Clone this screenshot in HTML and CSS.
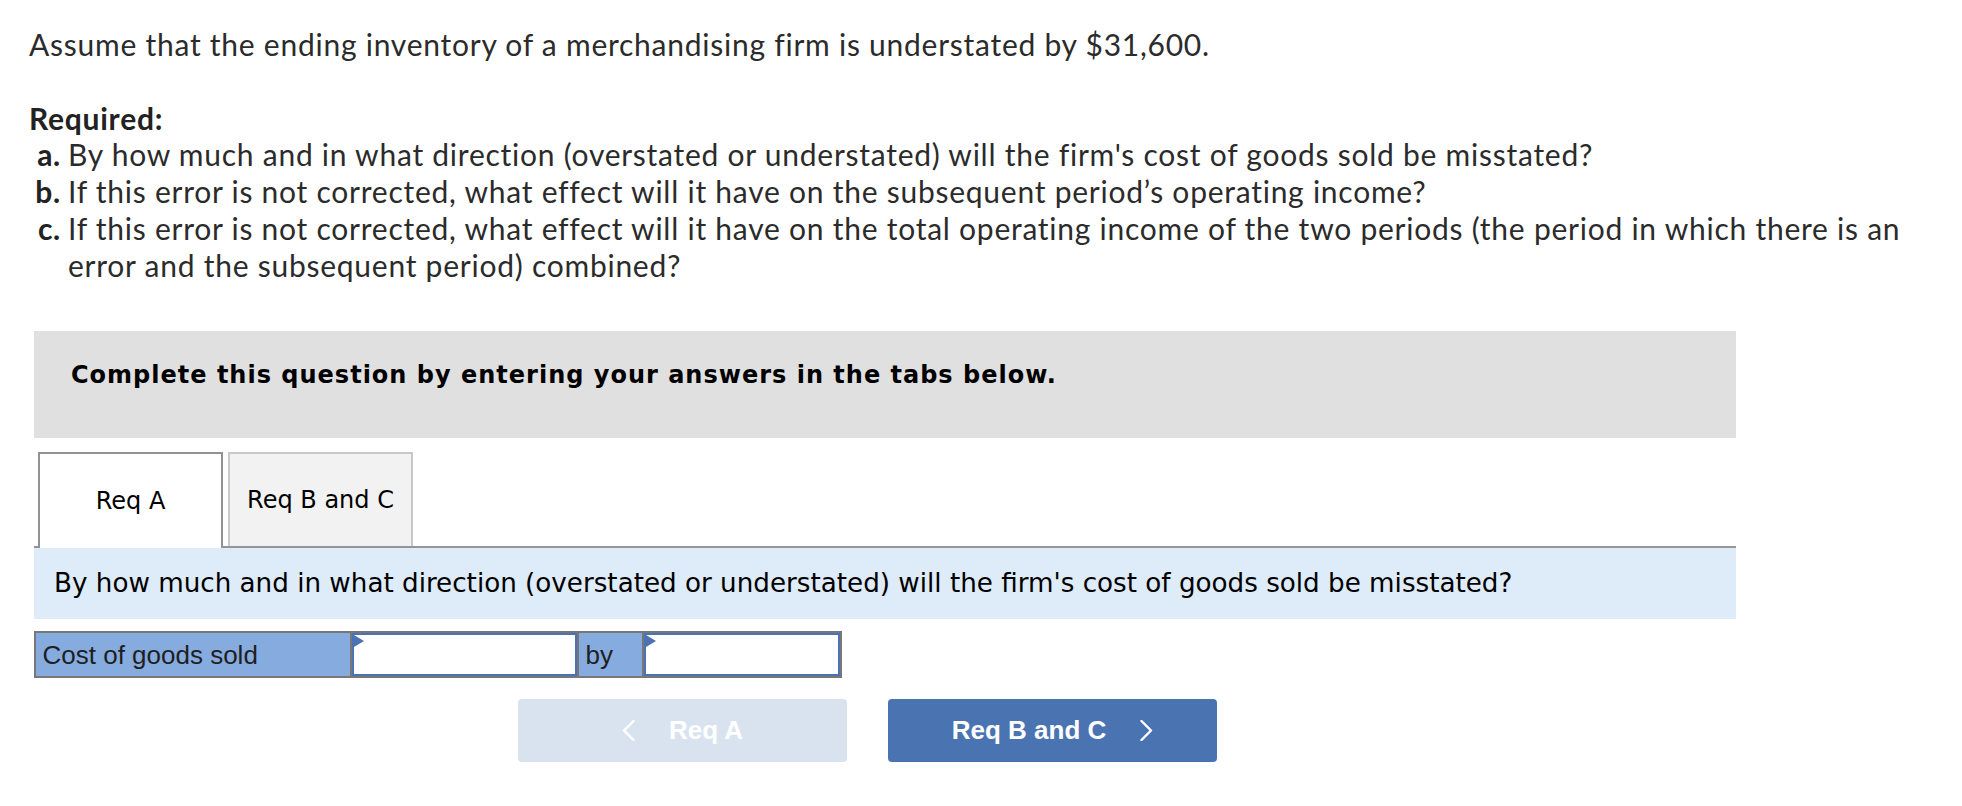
FILE: index.html
```html
<!DOCTYPE html>
<html lang="en">
<head>
<meta charset="utf-8">
<title>Inventory error question</title>
<link rel="stylesheet" href="styles.css">
</head>
<body>
<div class="page">
  <div class="question">
    <p class="intro">Assume that the ending inventory of a merchandising firm is understated by $31,600.</p>
    <p class="req-title">Required:</p>
    <ul class="req-list">
      <li><b class="req-label">a.</b><span>By how much and in what direction (overstated or understated) will the firm's cost of goods sold be misstated?</span></li>
      <li><b class="req-label">b.</b><span>If this error is not corrected, what effect will it have on the subsequent period’s operating income?</span></li>
      <li><b class="req-label">c.</b><span>If this error is not corrected, what effect will it have on the total operating income of the two periods (the period in which there is an<br>error and the subsequent period) combined?</span></li>
    </ul>
  </div>

  <div class="panel">
    <div class="instructions">Complete this question by entering your answers in the tabs below.</div>

    <div class="tabs">
      <div class="tab tab-active">Req A</div>
      <div class="tab">Req B and C</div>
    </div>

    <div class="prompt">By how much and in what direction (overstated or understated) will the firm's cost of goods sold be misstated?</div>

    <div class="answer-row">
      <div class="cell cell-label cell-name">Cost of goods sold</div>
      <div class="cell cell-input cell-input-wide"><span class="flag"></span></div>
      <div class="cell cell-label cell-by">by</div>
      <div class="cell cell-input cell-input-amount"><span class="flag"></span></div>
    </div>

    <div class="nav">
      <button class="nav-btn nav-prev" type="button">
        <svg class="chev" viewBox="0 0 13 21" width="13" height="21"><polyline points="11.5,1 2,10.5 11.5,20" /></svg>
        <span>Req A</span>
      </button>
      <button class="nav-btn nav-next" type="button">
        <span>Req B and C</span>
        <svg class="chev" viewBox="0 0 13 21" width="13" height="21"><polyline points="1.5,1 11,10.5 1.5,20" /></svg>
      </button>
    </div>
  </div>
</div>
</body>
</html>
```

FILE: styles.css
```css
* {
  box-sizing: border-box;
}

html, body {
  margin: 0;
  padding: 0;
  background: #ffffff;
}

.page {
  padding: 26px 0 0 0;
}

.question {
  padding-left: 29px;
  font-family: Lato, "Open Sans", sans-serif;
  font-size: 30px;
  letter-spacing: 0.75px;
  line-height: 36.7px;
  color: #2b2b2b;
}

.intro {
  margin: 0 0 37px 0;
}

.req-title {
  margin: 0;
  font-weight: 700;
  color: #222;
}

.req-list {
  list-style: none;
  margin: 0;
  padding: 0;
}

.req-list li {
  display: flex;
  gap: 7px;
}

.req-label {
  flex: 0 0 32px;
  text-align: right;
  font-weight: 700;
  color: #222;
}

.panel {
  margin: 48px 0 0 34px;
  width: 1702px;
}

.instructions {
  background: #e0e0e0;
  height: 107px;
  padding: 30px 0 0 37px;
  font-family: Verdana, "DejaVu Sans", sans-serif;
  font-weight: 700;
  font-size: 24px;
  letter-spacing: 1px;
  line-height: 28px;
  color: #000;
}

.tabs {
  display: flex;
  align-items: flex-end;
  gap: 5px;
  margin-top: 14px;
  padding-left: 4px;
  height: 96px;
  border-bottom: 2px solid #959595;
}

.tab {
  width: 185px;
  height: 94px;
  display: flex;
  align-items: center;
  justify-content: center;
  font-family: Verdana, "DejaVu Sans", sans-serif;
  font-size: 24px;
  color: #000;
  background: #f2f2f2;
  border: 2px solid #c8c8c8;
  border-bottom: none;
}

.tab-active {
  height: 96px;
  margin-bottom: -2px;
  background: #ffffff;
  border-color: #929292;
  position: relative;
}

.prompt {
  background: #deebf8;
  height: 71px;
  padding: 19px 0 0 20px;
  font-family: Verdana, "DejaVu Sans", sans-serif;
  font-size: 26.2px;
  line-height: 32px;
  color: #000;
}

.answer-row {
  display: flex;
  margin-top: 12px;
  width: 808px;
  height: 47px;
  border: 2px solid #777777;
}

.cell {
  height: 43px;
}

.cell + .cell {
  border-left: 2px solid #777777;
}

.cell-label {
  background: #85abdf;
  font-family: Arial, "Liberation Sans", sans-serif;
  font-size: 26px;
  line-height: 43px;
  padding: 1px 0 0 6.5px;
  color: #1f1f1f;
}

.cell-name {
  width: 314px;
}

.cell-by {
  width: 65px;
}

.cell-input {
  position: relative;
  background: #fff;
  box-shadow: inset 0 0 0 2px #4a72b4;
}

.cell-input-wide {
  width: 227px;
}

.cell-input-amount {
  flex: 1;
}

.flag {
  position: absolute;
  left: 2px;
  top: 2px;
  width: 0;
  height: 0;
  border-top: 6px solid transparent;
  border-bottom: 6px solid transparent;
  border-left: 10px solid #4a72b4;
}

.nav {
  display: flex;
  gap: 41px;
  margin: 21px 0 0 484px;
}

.nav-btn {
  width: 329px;
  height: 63px;
  border: none;
  border-radius: 4px;
  display: flex;
  align-items: center;
  justify-content: center;
  gap: 34px;
  font-family: Arial, "Liberation Sans", sans-serif;
  font-weight: 700;
  font-size: 26px;
  color: #ffffff;
  padding: 0;
}

.nav-prev {
  background: #d9e3ef;
}

.nav-next {
  background: #4a74b1;
}

.chev {
  display: block;
  fill: none;
  stroke: #ffffff;
  stroke-width: 2.4;
  stroke-linecap: round;
  stroke-linejoin: round;
}
```
